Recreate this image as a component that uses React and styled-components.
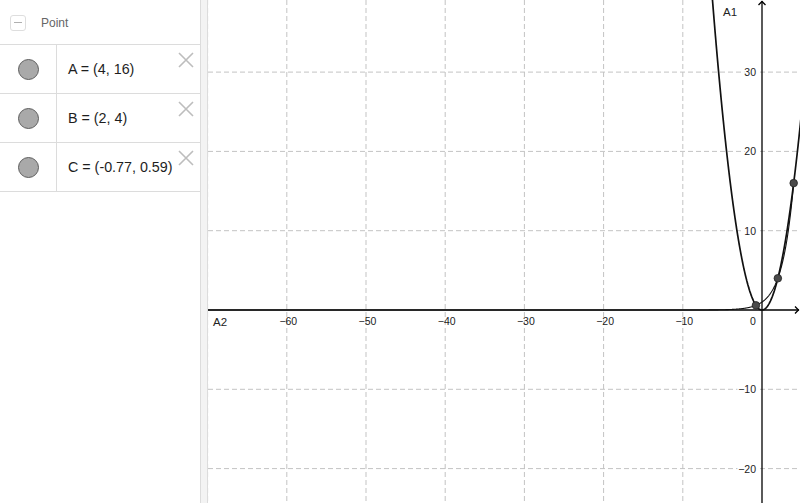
import React from "react";
import styled, { createGlobalStyle } from "styled-components";

const Global = createGlobalStyle`
  html, body { margin: 0; padding: 0; background: #fff; }
  body { font-family: "Liberation Sans", Arial, sans-serif; overflow: hidden; }
  * { box-sizing: border-box; }
`;

const Page = styled.div`
  display: flex;
  width: 800px;
  height: 503px;
  overflow: hidden;
  background: #fff;
`;

const AlgebraPanel = styled.div`
  width: 201px;
  flex: none;
  border-right: 1px solid #dcdcdc;
  display: flex;
  flex-direction: column;
`;

const Splitter = styled.div`
  width: 7px;
  flex: none;
  background: #f3f3f3;
  border-right: 1px solid #dcdcdc;
`;

const GraphicsView = styled.div`
  flex: 1;
  position: relative;
  overflow: hidden;
`;

const Header = styled.div`
  height: 45px;
  display: flex;
  align-items: center;
  gap: 15px;
  padding-left: 10px;
  padding-top: 1px;
  border-bottom: 1px solid #dcdcdc;
`;

const Toggle = styled.div`
  width: 16px;
  height: 16px;
  border: 1px solid #dedede;
  border-radius: 3px;
  display: flex;
  align-items: center;
  justify-content: center;
  &::after {
    content: "";
    width: 8px;
    height: 1px;
    background: #b0b0b0;
  }
`;

const HeaderLabel = styled.span`
  font-size: 12px;
  color: #666;
  margin-top: 1px;
`;

const Row = styled.div`
  height: 49px;
  display: flex;
  border-bottom: 1px solid #dcdcdc;
`;

const MarbleCell = styled.div`
  width: 57px;
  flex: none;
  border-right: 1px solid #dcdcdc;
  display: flex;
  align-items: center;
  justify-content: center;
`;

const Marble = styled.div`
  width: 21px;
  height: 21px;
  border-radius: 50%;
  background: #a9a9a9;
  border: 1px solid #5e5e5e;
  margin-left: 1px;
`;

const Value = styled.div`
  flex: 1;
  display: flex;
  align-items: center;
  padding-left: 11px;
  padding-bottom: 1px;
  font-size: 14.3px;
  color: #1e1e1e;
  white-space: nowrap;
`;

const Delete = styled.div`
  align-self: flex-start;
  margin-top: 7px;
  margin-right: 6px;
  width: 16px;
  height: 16px;
  flex: none;
  display: flex;
`;

const Chart = styled.svg`
  display: block;
  width: 100%;
  height: 100%;
`;

const points = [
  { name: "A", text: "A = (4, 16)" },
  { name: "B", text: "B = (2, 4)" },
  { name: "C", text: "C = (-0.77, 0.59)" },
];

const OX = 554;
const OY = 310;
const SX = 7.92;
const SY = 7.93;
const W = 592;
const H = 503;
const X = (x) => OX + x * SX;
const Y = (y) => OY - y * SY;

function curve(fn, x0, x1, step) {
  let d = "";
  for (let x = x0; x <= x1 + 1e-9; x += step) {
    const px = X(x);
    let py = Y(fn(x));
    if (py < -50) py = -50;
    d += (d ? " L" : "M") + px.toFixed(2) + " " + py.toFixed(2);
  }
  return d;
}

function Graph() {
  const vlines = [-7, -6, -5, -4, -3, -2, -1];
  const hlines = [3, 2, 1, -1, -2];
  const xlabels = [-6, -5, -4, -3, -2, -1];
  const ylabels = [3, 2, 1, -1, -2];
  const parab = curve((x) => x * x, -6.6, 4.9, 0.02);
  const expo = curve((x) => Math.pow(2, x), -70.5, 4, 0.02);
  const dots = [
    [4, 16],
    [2, 4],
    [-0.7667, 0.5878],
  ];
  const label = {
    fontFamily: "Liberation Sans, Arial, sans-serif",
    fontSize: 10.5,
    fill: "#222",
  };
  return (
    <Chart viewBox={`0 0 ${W} ${H}`}>
      <g stroke="#c3c3c3" strokeWidth="1" strokeDasharray="5 3">
        {vlines.map((k) => (
          <line key={"v" + k} x1={X(k * 10)} y1={0} x2={X(k * 10)} y2={H} />
        ))}
        {hlines.map((k) => (
          <line key={"h" + k} x1={0} y1={Y(k * 10)} x2={W} y2={Y(k * 10)} />
        ))}
      </g>
      <g {...label}>
        {xlabels.map((k) => (
          <text key={"xl" + k} x={X(k * 10) + 1.5} y={325} textAnchor="middle">
            {"\u2212" + Math.abs(k * 10)}
          </text>
        ))}
        <text x={OX - 9} y={325} textAnchor="middle">0</text>
        {ylabels.map((k) => (
          <text
            key={"yl" + k}
            x={OX - 6}
            y={Y(k * 10) + 4}
            textAnchor="end"
            stroke="#fff"
            strokeWidth="3"
            paintOrder="stroke"
          >
            {(k < 0 ? "\u2212" : "") + Math.abs(k * 10)}
          </text>
        ))}
      </g>
      <g fontFamily="Liberation Sans, Arial, sans-serif" fontSize="11.5" fill="#222">
        <text x={515} y={16}>A1</text>
        <text x={5} y={326}>A2</text>
      </g>
      <g stroke="#000" strokeWidth="1.3" fill="none">
        <line x1={0} y1={OY} x2={W - 1} y2={OY} />
        <line x1={OX} y1={1} x2={OX} y2={H} />
        <polyline points={`${W - 5},${OY - 3.5} ${W - 1.5},${OY} ${W - 5},${OY + 3.5}`} />
        <polyline points={`${OX - 3.5},${5} ${OX},${1.5} ${OX + 3.5},${5}`} />
      </g>
      <g fill="none" stroke="#111" strokeLinejoin="round">
        <path d={parab} strokeWidth="1.7" />
        <path d={expo} strokeWidth="1.1" />
      </g>
      <g fill="#4a4a4a" stroke="#222" strokeWidth="0.8">
        {dots.map(([x, y], i) => (
          <circle key={i} cx={X(x)} cy={Y(y)} r={3.8} />
        ))}
      </g>
    </Chart>
  );
}

export default function App() {
  return (
    <>
      <Global />
      <Page>
        <AlgebraPanel>
          <Header>
            <Toggle />
            <HeaderLabel>Point</HeaderLabel>
          </Header>
          {points.map((p) => (
            <Row key={p.name}>
              <MarbleCell>
                <Marble />
              </MarbleCell>
              <Value>{p.text}</Value>
              <Delete>
                <svg width="16" height="16" viewBox="0 0 16 16">
                  <path d="M1 1 L15 15 M15 1 L1 15" stroke="#bdbdbd" strokeWidth="1.6" fill="none" />
                </svg>
              </Delete>
            </Row>
          ))}
        </AlgebraPanel>
        <Splitter />
        <GraphicsView>
          <Graph />
        </GraphicsView>
      </Page>
    </>
  );
}
